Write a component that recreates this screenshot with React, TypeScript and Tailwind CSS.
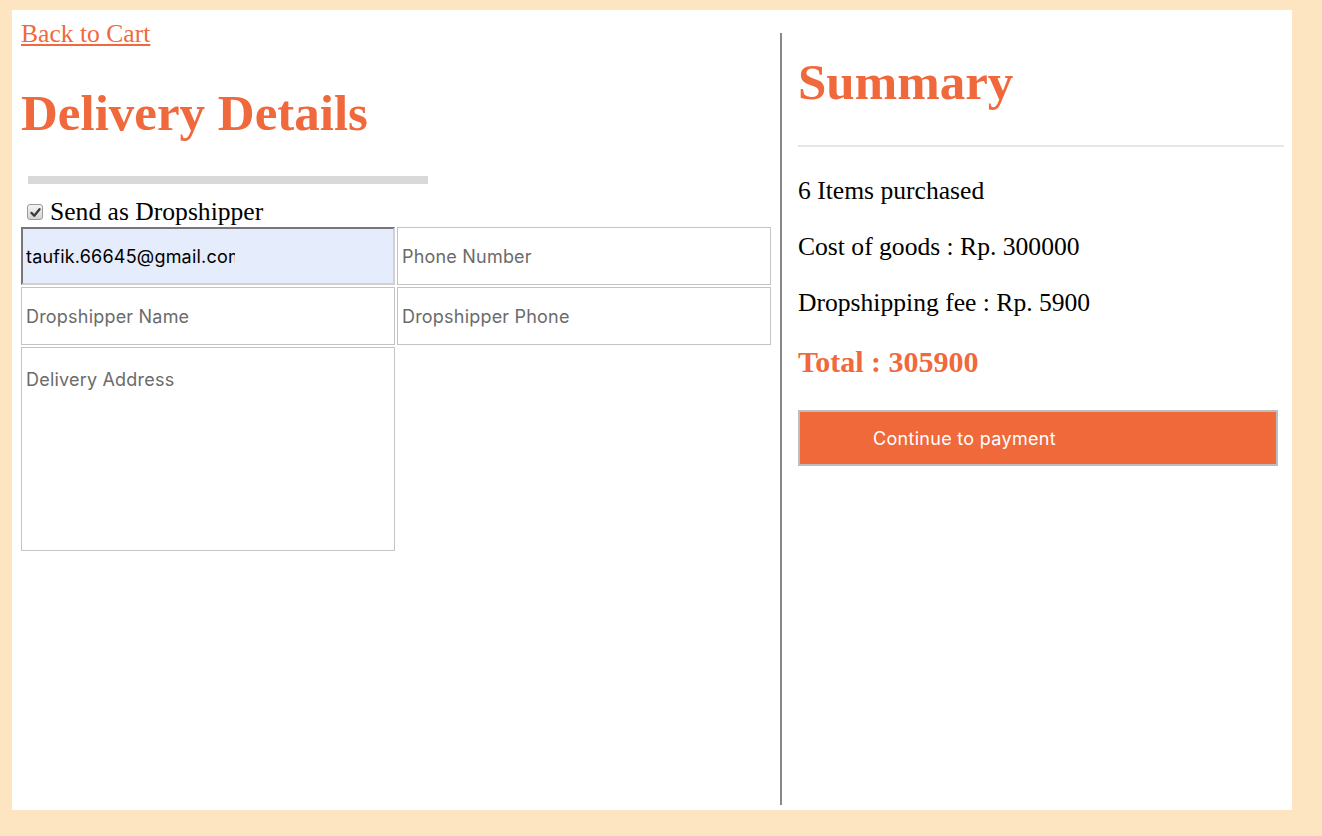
import { useState } from 'react'

const serif = "font-['Liberation_Serif','Times_New_Roman',serif]"
const sans = "font-['Inter','Liberation_Sans',Arial,sans-serif]"

const field =
  'h-[58px] border border-[#c4c4c4] px-[4px] text-[18px] tracking-[0.2px] placeholder:text-[#6b6b6b] outline-none'

export default function App() {
  const [dropship, setDropship] = useState(true)

  return (
    <div className="h-[836px] w-[1322px] bg-[#fce5c0] pl-[12px] pt-[10px]">
      <div className="flex h-[800px] w-[1280px] bg-white">
        {/* Delivery form */}
        <div className={`w-[768px] pl-[9px] ${serif}`}>
          <a href="#" className="mt-[9px] block w-fit text-[25.6px] leading-[30px] text-[#f0693c] underline">
            Back to Cart
          </a>
          <h1 className="mt-[35px] text-[51px] font-bold leading-[58px] text-[#f0693c]">Delivery Details</h1>
          <div className="ml-[7px] mt-[34px] h-[8px] w-[400px] bg-[#d9d9d9]" />
          <label className="ml-[6px] mt-[15px] flex cursor-pointer items-center gap-[7px] text-[25.6px] leading-[26px] text-black">
            <input
              type="checkbox"
              checked={dropship}
              onChange={(e) => setDropship(e.target.checked)}
              className="sr-only"
            />
            <span className="flex h-[16px] w-[16px] items-center justify-center rounded-[3px] border border-[#9a9a9a] bg-gradient-to-b from-[#f4f4f4] to-[#d4d4d4]">
              {dropship && (
                <svg viewBox="0 0 16 16" className="h-[13px] w-[13px]">
                  <path d="M3 8.5 L6.5 12 L13 4" fill="none" stroke="#3a3a3a" strokeWidth="2.8" strokeLinecap="round" strokeLinejoin="round" />
                </svg>
              )}
            </span>
            Send as Dropshipper
          </label>

          <div className={`mt-[2px] grid w-[750px] grid-cols-2 gap-[2px] ${sans}`}>
            <div className="flex h-[58px] items-center border-2 border-[#777] border-b-[#d0d0d0] border-r-[#d0d0d0] bg-[#e5ecfc] px-[3px]">
              <input
                defaultValue="taufik.66645@gmail.com"
                className="w-[209px] bg-transparent text-[18px] tracking-[0.2px] text-black outline-none"
              />
            </div>
            <input placeholder="Phone Number" className={field} />
            <input placeholder="Dropshipper Name" className={field} />
            <input placeholder="Dropshipper Phone" className={field} />
            <textarea placeholder="Delivery Address" className={`${field} h-[204px] resize-none pt-[18px]`} />
          </div>
        </div>

        {/* Summary */}
        <div className={`mb-[5px] mt-[23px] flex-1 border-l-2 border-[#888] pl-[16px] pr-[8px] ${serif}`}>
          <h2 className="mt-[20px] text-[51px] font-bold leading-[58px] text-[#f0693c]">Summary</h2>
          <hr className="mt-[34px] border-t-2 border-[#e6e6e6]" />
          <div className="mt-[29px] space-y-[26px] text-[25.6px] leading-[30px] text-black">
            <p>6 Items purchased</p>
            <p>Cost of goods : Rp. 300000</p>
            <p>Dropshipping fee : Rp. 5900</p>
          </div>
          <p className="mt-[28px] text-[30px] font-bold leading-[32px] text-[#f0693c]">Total : 305900</p>
          <button
            className={`mt-[32px] h-[56px] w-[480px] border-2 border-[#bdbdbd] bg-[#f0693b] pl-[73px] text-left text-[18px] tracking-[0.3px] text-white ${sans}`}
          >
            Continue to payment
          </button>
        </div>
      </div>
    </div>
  )
}
